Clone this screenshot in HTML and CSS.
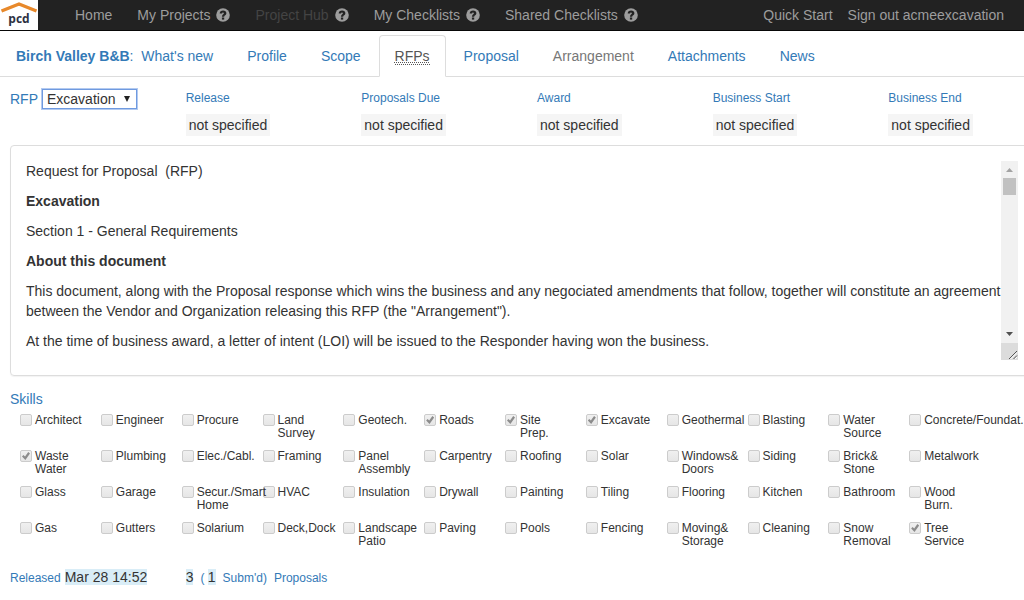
FILE: index.html
```html
<!DOCTYPE html>
<html lang="en">
<head>
<meta charset="utf-8">
<title>RFPs - Birch Valley B&amp;B</title>
<link rel="stylesheet" href="styles.css">
</head>
<body>
<svg class="defs" aria-hidden="true">
  <symbol id="help" viewBox="0 0 14 14">
    <circle cx="7" cy="7" r="6.8" fill="#9d9d9d"/>
    <path d="M3.7 5.6C3.7 3.6 5 2.4 7.100 2.400S10.400 3.600 10.400 5.200C10.400 7.100 8.200 7.200 8.200 8.700H5.900C5.900 6.600 7.900 6.500 7.900 5.300C7.900 4.700 7.500 4.400 7 4.400S6.100 4.800 6.100 5.600Z" fill="#222"/>
    <path d="M5.900 9.500H8.200V11.600H5.900Z" fill="#222"/>
  </symbol>
</svg>
<header class="navbar">
  <a class="logo" href="#" aria-label="pcd">
    <svg class="roof" viewBox="0 0 38 13" aria-hidden="true"><path d="M1.500 11L19 4L36.500 11" fill="none" stroke="#e8892b" stroke-width="3.400"/></svg>
    <span class="logo-text">pcd</span>
  </a>
  <nav class="nav-main">
    <a href="#">Home</a>
    <a href="#">My Projects <svg class="help"><use href="#help"/></svg></a>
    <a class="disabled" href="#">Project Hub <svg class="help"><use href="#help"/></svg></a>
    <a href="#">My Checklists <svg class="help"><use href="#help"/></svg></a>
    <a href="#">Shared Checklists <svg class="help"><use href="#help"/></svg></a>
  </nav>
  <nav class="nav-user">
    <a href="#">Quick Start</a>
    <a href="#">Sign out acmeexcavation</a>
  </nav>
</header>
<nav class="tabs">
  <a class="tab" href="#"><strong>Birch Valley B&amp;B</strong>:&nbsp; What's new</a>
  <a class="tab" href="#">Profile</a>
  <a class="tab" href="#">Scope</a>
  <a class="tab active" href="#"><abbr title="Requests for Proposal">RFPs</abbr></a>
  <a class="tab" href="#">Proposal</a>
  <a class="tab muted" href="#">Arrangement</a>
  <a class="tab" href="#">Attachments</a>
  <a class="tab" href="#">News</a>
</nav>
<main>
  <section class="summary">
    <div class="picker">
      <label for="rfp">RFP</label>
      <span class="select-wrap"><select id="rfp"><option>Excavation</option></select></span>
    </div>
    <div class="fact"><span class="fact-label">Release</span><span class="fact-value">not specified</span></div>
    <div class="fact"><span class="fact-label">Proposals Due</span><span class="fact-value">not specified</span></div>
    <div class="fact"><span class="fact-label">Award</span><span class="fact-value">not specified</span></div>
    <div class="fact"><span class="fact-label">Business Start</span><span class="fact-value">not specified</span></div>
    <div class="fact"><span class="fact-label">Business End</span><span class="fact-value">not specified</span></div>
  </section>
  <section class="panel">
    <article class="document">
      <p>Request for Proposal&nbsp; (RFP)</p>
      <p><strong>Excavation</strong></p>
      <p>Section 1 - General Requirements</p>
      <p><strong>About this document</strong></p>
      <p>This document, along with the Proposal response which wins the business and any negociated amendments that follow, together will constitute an agreement between the Vendor and Organization releasing this RFP (the "Arrangement").</p>
      <p>At the time of business award, a letter of intent (LOI) will be issued to the Responder having won the business.</p>
    </article>
    <div class="scrollbar" aria-hidden="true">
      <svg class="arrow" viewBox="0 0 17 17"><path d="M5 11L8.500 7L12 11Z" fill="#a3a3a3"/></svg>
      <div class="thumb"></div>
      <svg class="arrow bottom" viewBox="0 0 17 17"><path d="M5 6L8.500 10L12 6Z" fill="#505050"/></svg>
      <svg class="grip" viewBox="0 0 17 17"><path d="M8 16L16 8M12.500 16L16 12.500" stroke="#555" fill="none"/><path d="M9.500 16L16 9.500M14 16L16 14" stroke="#fff" fill="none"/></svg>
    </div>
  </section>
  <section>
    <h2 class="heading">Skills</h2>
    <div class="skills">
      <label class="skill"><input type="checkbox" disabled><span>Architect</span></label>
      <label class="skill"><input type="checkbox" disabled><span>Engineer</span></label>
      <label class="skill"><input type="checkbox" disabled><span>Procure</span></label>
      <label class="skill"><input type="checkbox" disabled><span>Land<br>Survey</span></label>
      <label class="skill"><input type="checkbox" disabled><span>Geotech.</span></label>
      <label class="skill"><input type="checkbox" disabled checked><span>Roads</span></label>
      <label class="skill"><input type="checkbox" disabled checked><span>Site<br>Prep.</span></label>
      <label class="skill"><input type="checkbox" disabled checked><span>Excavate</span></label>
      <label class="skill"><input type="checkbox" disabled><span>Geothermal</span></label>
      <label class="skill"><input type="checkbox" disabled><span>Blasting</span></label>
      <label class="skill"><input type="checkbox" disabled><span>Water<br>Source</span></label>
      <label class="skill"><input type="checkbox" disabled><span>Concrete/Foundat.</span></label>
      <label class="skill"><input type="checkbox" disabled checked><span>Waste<br>Water</span></label>
      <label class="skill"><input type="checkbox" disabled><span>Plumbing</span></label>
      <label class="skill"><input type="checkbox" disabled><span>Elec./Cabl.</span></label>
      <label class="skill"><input type="checkbox" disabled><span>Framing</span></label>
      <label class="skill"><input type="checkbox" disabled><span>Panel<br>Assembly</span></label>
      <label class="skill"><input type="checkbox" disabled><span>Carpentry</span></label>
      <label class="skill"><input type="checkbox" disabled><span>Roofing</span></label>
      <label class="skill"><input type="checkbox" disabled><span>Solar</span></label>
      <label class="skill"><input type="checkbox" disabled><span>Windows&amp;<br>Doors</span></label>
      <label class="skill"><input type="checkbox" disabled><span>Siding</span></label>
      <label class="skill"><input type="checkbox" disabled><span>Brick&amp;<br>Stone</span></label>
      <label class="skill"><input type="checkbox" disabled><span>Metalwork</span></label>
      <label class="skill"><input type="checkbox" disabled><span>Glass</span></label>
      <label class="skill"><input type="checkbox" disabled><span>Garage</span></label>
      <label class="skill"><input type="checkbox" disabled><span>Secur./Smart<br>Home</span></label>
      <label class="skill"><input type="checkbox" disabled><span>HVAC</span></label>
      <label class="skill"><input type="checkbox" disabled><span>Insulation</span></label>
      <label class="skill"><input type="checkbox" disabled><span>Drywall</span></label>
      <label class="skill"><input type="checkbox" disabled><span>Painting</span></label>
      <label class="skill"><input type="checkbox" disabled><span>Tiling</span></label>
      <label class="skill"><input type="checkbox" disabled><span>Flooring</span></label>
      <label class="skill"><input type="checkbox" disabled><span>Kitchen</span></label>
      <label class="skill"><input type="checkbox" disabled><span>Bathroom</span></label>
      <label class="skill"><input type="checkbox" disabled><span>Wood<br>Burn.</span></label>
      <label class="skill"><input type="checkbox" disabled><span>Gas</span></label>
      <label class="skill"><input type="checkbox" disabled><span>Gutters</span></label>
      <label class="skill"><input type="checkbox" disabled><span>Solarium</span></label>
      <label class="skill"><input type="checkbox" disabled><span>Deck,Dock</span></label>
      <label class="skill"><input type="checkbox" disabled><span>Landscape<br>Patio</span></label>
      <label class="skill"><input type="checkbox" disabled><span>Paving</span></label>
      <label class="skill"><input type="checkbox" disabled><span>Pools</span></label>
      <label class="skill"><input type="checkbox" disabled><span>Fencing</span></label>
      <label class="skill"><input type="checkbox" disabled><span>Moving&amp;<br>Storage</span></label>
      <label class="skill"><input type="checkbox" disabled><span>Cleaning</span></label>
      <label class="skill"><input type="checkbox" disabled><span>Snow<br>Removal</span></label>
      <label class="skill"><input type="checkbox" disabled checked><span>Tree<br>Service</span></label>
    </div>
  </section>
  <footer class="status">
    <div class="released"><span>Released</span><span><mark>Mar 28 14:52</mark></span></div>
    <div class="counts"><span><mark>3</mark></span><span>( <mark>1</mark></span><span>Subm'd)</span><span>Proposals</span></div>
  </footer>
</main>
</body>
</html>
```
FILE: styles.css
```css
* {
  box-sizing: border-box;
}

body {
  margin: 0;
  background: #fff;
  color: #333;
  font: 14px/20px "Liberation Sans", Arial, sans-serif;
  overflow-x: hidden;
}

a {
  color: #337ab7;
  text-decoration: none;
}

.defs {
  display: none;
}

.navbar {
  display: flex;
  height: 31px;
  background: #222;
  border-bottom: 1px solid #080808;
  white-space: nowrap;
}

.logo {
  display: flex;
  flex-direction: column;
  align-items: center;
  width: 38px;
  margin-right: 37px;
  background: #fff;
}

.roof {
  width: 38px;
  height: 13px;
}

.logo-text {
  color: #2d3142;
  font: bold 12px/12px "Open Sans", "Noto Sans", sans-serif;
}

.nav-main,
.nav-user {
  display: flex;
  align-items: center;
}

.nav-main {
  gap: 25px;
}

.nav-user {
  gap: 15px;
  margin-left: auto;
  padding-right: 20px;
}

.navbar nav a {
  display: flex;
  align-items: center;
  gap: 6px;
  color: #9d9d9d;
}

.navbar nav .disabled {
  color: #444;
}

.help {
  width: 14px;
  height: 14px;
  margin-bottom: 1px;
}

.tabs {
  display: flex;
  gap: 2px;
  height: 46px;
  padding-top: 4px;
  border-bottom: 1px solid #ddd;
  white-space: nowrap;
}

.tab {
  height: 42px;
  padding: 10px 15px;
  border: 1px solid transparent;
  border-radius: 4px 4px 0 0;
}

.tab.active {
  background: #fff;
  border-color: #ddd #ddd #fff;
  color: #555;
}

.tab.muted {
  color: #777;
}

abbr {
  border-bottom: 1px dotted #555;
  text-decoration: underline dotted 1px;
}

main {
  padding-left: 10px;
}

.summary {
  display: grid;
  grid-template-columns: repeat(6, 1fr);
  margin-right: -40px;
  padding-top: 11px;
}

.picker {
  display: flex;
  align-items: flex-start;
  gap: 4px;
  padding-top: 1px;
  color: #337ab7;
}

.select-wrap {
  position: relative;
}

.select-wrap::after {
  content: "";
  position: absolute;
  top: 7px;
  right: 7px;
  width: 6px;
  height: 6px;
  background: #222;
  clip-path: polygon(0 0, 100% 0, 50% 100%);
  pointer-events: none;
}

select {
  display: block;
  appearance: none;
  width: 95px;
  height: 20px;
  padding: 0 4px;
  border: 1px solid #6f9ae0;
  border-radius: 0;
  box-shadow: 0 0 0 1px #b3caf0;
  background: #fff;
  color: #333;
  font: inherit;
  line-height: 18px;
}

.fact {
  display: flex;
  flex-direction: column;
  align-items: flex-start;
  gap: 6px;
}

.fact-label {
  color: #337ab7;
  font-size: 12px;
}

.fact-value {
  padding: 1px 3px;
  background: #f5f5f5;
}

.panel {
  display: flex;
  margin: 9px -10px 0 0;
  padding: 15px;
  border: 1px solid #ddd;
  border-radius: 4px;
  box-shadow: 0 1px 1px rgba(0, 0, 0, 0.05);
}

.document {
  flex: 1;
}

.document p {
  margin: 0 0 10px;
}

.document p:last-child {
  margin-bottom: 9px;
}

.scrollbar {
  display: flex;
  flex-direction: column;
  width: 17px;
  background: #f1f1f1;
}

.arrow,
.grip {
  width: 17px;
  height: 17px;
}

.arrow.bottom {
  margin-top: auto;
}

.grip {
  background: #dcdcdc;
}

.thumb {
  height: 17px;
  margin: 0 2px;
  background: #c1c1c1;
}

.heading {
  margin: 13px 0 5px;
  color: #337ab7;
  font-size: 14px;
  font-weight: normal;
  line-height: 20px;
}

.skills {
  display: grid;
  grid-template-columns: repeat(12, minmax(0, 1fr));
  grid-auto-rows: 36px;
  padding: 0 34px 0 10px;
}

.skill {
  display: flex;
  align-items: flex-start;
  gap: 3px;
  font-size: 12px;
  line-height: 13px;
  white-space: nowrap;
}

.skill span {
  position: relative;
  z-index: 1;
}

.skill input {
  position: relative;
  appearance: none;
  flex: none;
  width: 12px;
  height: 12px;
  margin: 0;
  border: 1px solid #ccc;
  border-radius: 2px;
  background: linear-gradient(#f0f0f0, #e6e6e6);
}

.skill input:checked::after {
  content: "";
  position: absolute;
  inset: 1px;
  background: #8c8c8c;
  clip-path: polygon(0 55%, 18% 38%, 38% 56%, 78% 0, 100% 18%, 42% 100%);
}

.status {
  display: grid;
  grid-template-columns: repeat(6, 1fr);
  margin-right: -40px;
  padding-top: 9px;
  color: #337ab7;
  font-size: 12px;
  white-space: nowrap;
}

.released,
.counts {
  display: flex;
  align-items: baseline;
}

.released {
  gap: 4px;
}

.counts {
  gap: 7px;
}

mark {
  background: #d9edf7;
  color: #333;
  font-size: 14px;
}
```
